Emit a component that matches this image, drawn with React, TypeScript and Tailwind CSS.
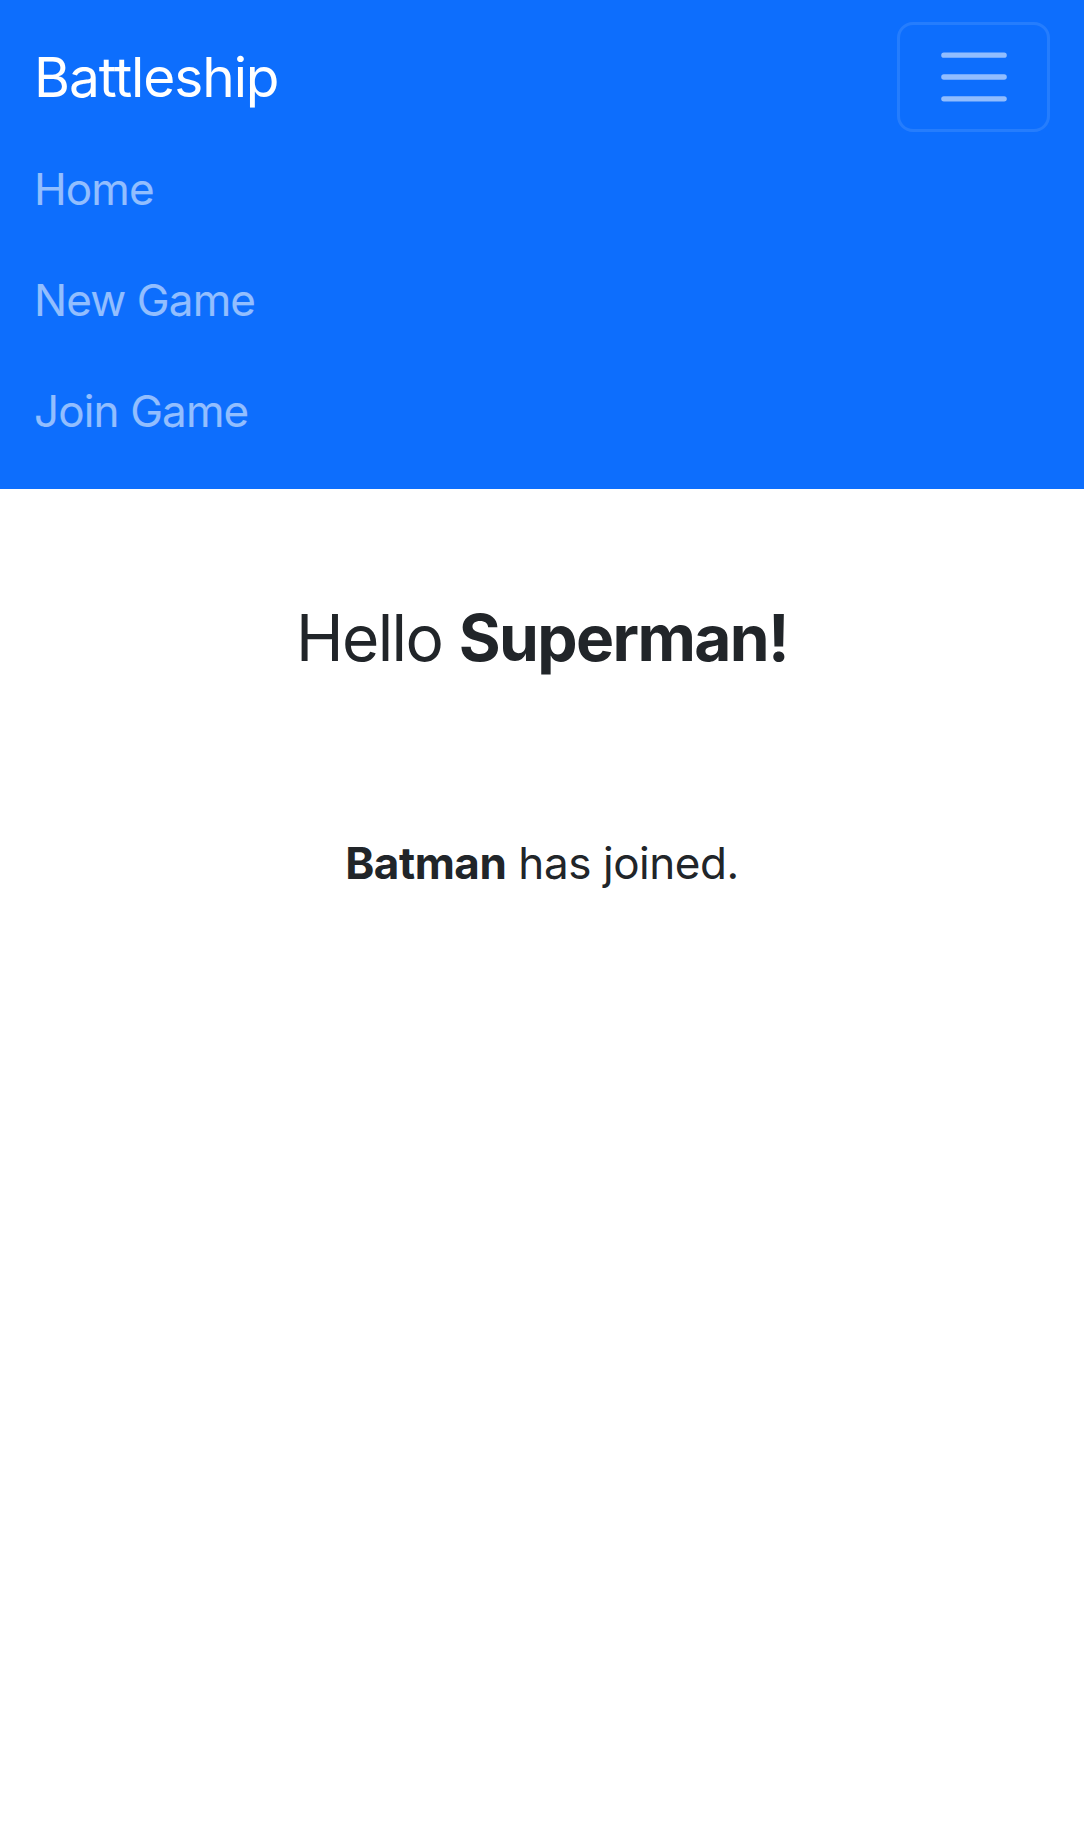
export default function App() {
  const links = ['Home', 'New Game', 'Join Game']

  return (
    <div className="min-h-[1845px] bg-white text-[#212529] font-['Inter','Liberation_Sans',sans-serif]">
      {/* navbar, expanded menu */}
      <nav className="bg-[#0d6efd] px-[34px] pt-[22px] pb-[22px]">
        <div className="flex items-center justify-between">
          <a className="text-[55px] leading-[82px] tracking-[-0.02em] text-white py-[14px]">Battleship</a>
          <button className="w-[153px] h-[110px] rounded-[16px] border-[3px] border-white/10 flex items-center justify-center">
            <svg width="82" height="82" viewBox="0 0 30 30">
              <path
                d="M4 7h22M4 15h22M4 23h22"
                stroke="rgba(255,255,255,0.55)"
                strokeWidth="2"
                strokeLinecap="round"
                fill="none"
              />
            </svg>
          </button>
        </div>
        <ul className="flex flex-col pt-[2px]">
          {links.map((l) => (
            <li key={l}>
              <a className="block py-[22px] text-[44px] leading-[67px] tracking-[-0.02em] text-white/55">{l}</a>
            </li>
          ))}
        </ul>
      </nav>

      <main className="pt-[110px] text-center">
        <h3 className="text-[64px] leading-[77px] font-normal tracking-[-0.025em]">
          Hello <strong className="font-bold">Superman!</strong>
        </h3>
        <p className="mt-[154px] text-[44px] leading-[66px] tracking-[-0.01em]">
          <strong className="font-bold">Batman</strong> has joined.
        </p>
      </main>
    </div>
  )
}
